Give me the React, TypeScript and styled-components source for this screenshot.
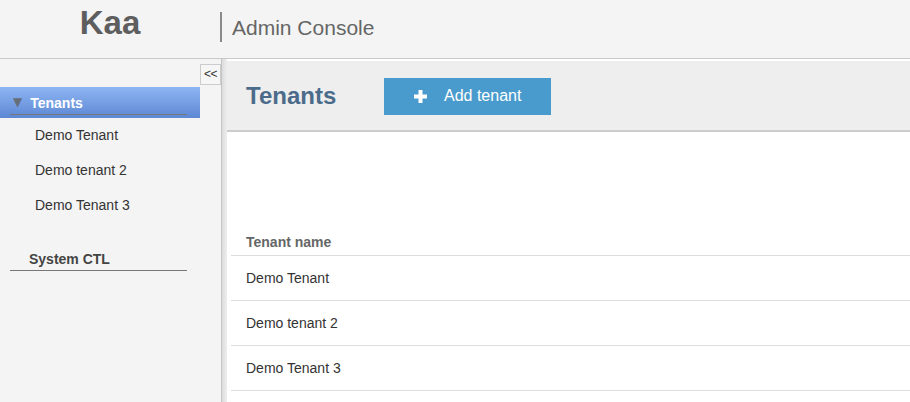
import React from "react";
import styled, { createGlobalStyle } from "styled-components";

const GlobalStyle = createGlobalStyle`
  html, body {
    margin: 0;
    padding: 0;
    background: #f4f4f4;
    font-family: "Liberation Sans", Arial, sans-serif;
  }
`;

const Page = styled.div`
  width: 910px;
  height: 402px;
  overflow: hidden;
  display: flex;
  flex-direction: column;
  background: #f4f4f4;
`;

const Header = styled.div`
  height: 58px;
  display: flex;
  align-items: center;
  border-bottom: 1px solid #c9c9c9;
  box-shadow: 0 1px 2px rgba(0, 0, 0, 0.06);
  background: #f4f4f4;
`;

const Logo = styled.div`
  width: 220px;
  text-align: center;
  font-size: 33px;
  font-weight: bold;
  color: #5e5e5e;
  margin-top: -12px;
`;

const Title = styled.div`
  border-left: 2px solid #8a8a8a;
  height: 28px;
  padding-left: 10px;
  margin-top: -4px;
  display: flex;
  align-items: center;
  font-size: 21px;
  color: #666;
  padding-top: 2px;
`;

const Body = styled.div`
  flex: 1;
  display: flex;
  min-height: 0;
`;

const Sidebar = styled.div`
  width: 221px;
  padding-top: 5px;
  display: flex;
  flex-direction: column;
  background: #f4f4f4;
`;

const CollapseRow = styled.div`
  display: flex;
  justify-content: flex-end;
`;

const CollapseButton = styled.button`
  width: 21px;
  height: 21px;
  padding: 0 0 1px;
  border: 1px solid #ccc;
  background: #f6f6f6;
  font-family: "Liberation Sans", Arial, sans-serif;
  font-size: 12px;
  color: #333;
  letter-spacing: -0.5px;
  display: flex;
  align-items: center;
  justify-content: center;
`;

const SectionHeader = styled.div<{ $active?: boolean }>`
  width: 200px;
  box-sizing: border-box;
  height: 31px;
  margin-top: ${(p) => (p.$active ? "2px" : "0")};
  padding: 0 13px 3px 10px;
  display: flex;
  flex-direction: column;
  justify-content: flex-end;
  background: ${(p) =>
    p.$active ? "linear-gradient(#8eb6f4, #5d87d3)" : "transparent"};
`;

const SectionLabel = styled.div<{ $active?: boolean }>`
  display: flex;
  align-items: center;
  gap: 8px;
  padding: 0 0 3px ${(p) => (p.$active ? "3px" : "19px")};
  border-bottom: 1px solid #777;
  font-size: 14px;
  font-weight: bold;
  color: ${(p) => (p.$active ? "#fff" : "#444")};
`;

const Arrow = styled.span`
  font-size: 12px;
  line-height: 14px;
  color: #666e7c;
  font-family: "DejaVu Sans", sans-serif;
  margin-top: -2px;
`;

const SubItem = styled.div`
  height: 35px;
  display: flex;
  align-items: center;
  padding-left: 35px;
  font-size: 14px;
  color: #333;
`;

const SubList = styled.div`
  margin: -1px 0 21px;
`;

const Splitter = styled.div`
  width: 5px;
  border-left: 1px solid #c4c4c4;
  background: linear-gradient(to right, #dcdcdc, #eeeeee);
`;

const Main = styled.div`
  flex: 1;
  background: #fff;
  display: flex;
  flex-direction: column;
  padding-top: 2px;
`;

const Toolbar = styled.div`
  height: 69px;
  background: #eeeeee;
  border-bottom: 2px solid #cccccc;
  display: flex;
  align-items: center;
  padding-left: 19px;
`;

const PageTitle = styled.h1`
  margin: 0;
  font-size: 24px;
  font-weight: bold;
  color: #4b6b8b;
  width: 138px;
`;

const AddButton = styled.button`
  height: 37px;
  width: 167px;
  margin-top: 1px;
  border: none;
  background: #4a9bcd;
  color: #fff;
  font-family: "Liberation Sans", Arial, sans-serif;
  font-size: 16px;
  display: flex;
  align-items: center;
  padding-left: 30px;
  gap: 17px;
`;

const Table = styled.div`
  margin: 98px 0 0 4px;
  display: flex;
  flex-direction: column;
`;

const HeadCell = styled.div`
  height: 21px;
  padding: 4px 0 0 15px;
  font-size: 14px;
  font-weight: bold;
  color: #666;
  border-bottom: 1px solid #ddd;
`;

const Row = styled.div`
  height: 44px;
  padding-left: 15px;
  display: flex;
  align-items: center;
  font-size: 14px;
  color: #333;
  border-bottom: 1px solid #ddd;
`;

const PlusIcon = () => (
  <svg width="13" height="13" viewBox="0 0 13 13">
    <rect x="4.5" y="0" width="4" height="13" fill="#fff" />
    <rect x="0" y="4.5" width="13" height="4" fill="#fff" />
  </svg>
);

const tenants = ["Demo Tenant", "Demo tenant 2", "Demo Tenant 3"];

export default function App() {
  return (
    <Page>
      <GlobalStyle />
      <Header>
        <Logo>Kaa</Logo>
        <Title>Admin Console</Title>
      </Header>
      <Body>
        <Sidebar>
          <CollapseRow>
            <CollapseButton>&lt;&lt;</CollapseButton>
          </CollapseRow>
          <SectionHeader $active>
            <SectionLabel $active>
              <Arrow>▼</Arrow>
              Tenants
            </SectionLabel>
          </SectionHeader>
          <SubList>
            {tenants.map((t) => (
              <SubItem key={t}>{t}</SubItem>
            ))}
          </SubList>
          <SectionHeader>
            <SectionLabel>System CTL</SectionLabel>
          </SectionHeader>
        </Sidebar>
        <Splitter />
        <Main>
          <Toolbar>
            <PageTitle>Tenants</PageTitle>
            <AddButton>
              <PlusIcon />
              Add tenant
            </AddButton>
          </Toolbar>
          <Table>
            <HeadCell>Tenant name</HeadCell>
            {tenants.map((t) => (
              <Row key={t}>{t}</Row>
            ))}
          </Table>
        </Main>
      </Body>
    </Page>
  );
}
